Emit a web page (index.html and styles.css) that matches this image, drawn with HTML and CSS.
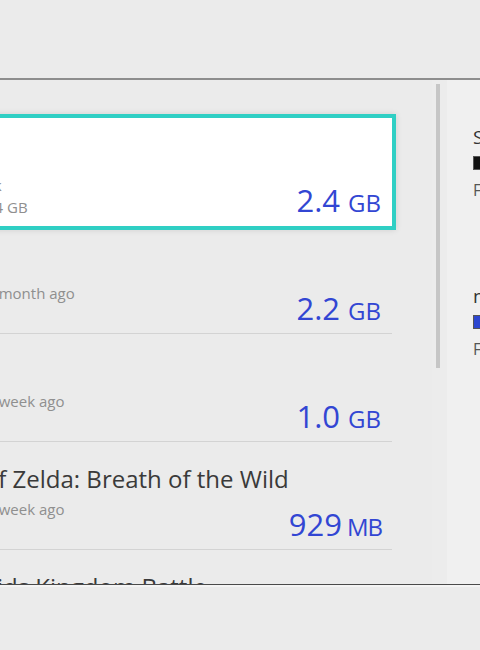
FILE: index.html
```html
<!DOCTYPE html>
<html lang="en">
<head>
    <meta charset="UTF-8">
    <meta name="viewport" content="width=device-width, initial-scale=1.0">
    <title>Manage Software</title>
    <link rel="stylesheet" href="styles.css">
</head>
<body>

    <div class="top-bar"></div>

    <div class="main">
        <!-- lista de softwares -->
        <div class="list">
            <div class="row selected">
                <div class="info">
                    <div class="title">Splatoon 2</div>
                    <div class="sub">Includes the DLC pack</div>
                    <div class="sub">Total w/ save data: 2.4 GB</div>
                </div>
                <div class="size"><span class="num">2.4</span><span class="unit">GB</span></div>
            </div>
            <div class="row">
                <div class="info">
                    <div class="title">ARMS</div>
                    <div class="sub">Last played: almost 1 month ago</div>
                </div>
                <div class="size"><span class="num">2.2</span><span class="unit">GB</span></div>
            </div>
            <div class="row">
                <div class="info">
                    <div class="title">1-2-Switch</div>
                    <div class="sub">Last played: almost 1 week ago</div>
                </div>
                <div class="size"><span class="num">1.0</span><span class="unit">GB</span></div>
            </div>
            <div class="row">
                <div class="info">
                    <div class="title">The Legend of Zelda: Breath of the Wild</div>
                    <div class="sub">Last played: almost 1 week ago</div>
                </div>
                <div class="size"><span class="num">929</span><span class="unit unit-mb">MB</span></div>
            </div>
            <div class="row">
                <div class="info">
                    <div class="title">Mario + Rabbids Kingdom Battle</div>
                    <div class="sub">Last played: almost 2 weeks ago</div>
                </div>
                <div class="size"><span class="num">2.8</span><span class="unit">GB</span></div>
            </div>
        </div>

        <div class="track">
            <div class="thumb"></div>
        </div>

        <!-- painel de armazenamento -->
        <div class="panel">
            <div class="group">
                <div class="group-title">System Memory</div>
                <div class="swatch black"></div>
                <div class="free">Free Space</div>
            </div>
            <div class="group">
                <div class="group-title">microSD Card</div>
                <div class="swatch blue"></div>
                <div class="free">Free Space</div>
            </div>
        </div>
    </div>

    <div class="bottom-bar"></div>

</body>
</html>
```

FILE: styles.css
```css
body {
    margin: 0;
    font-family: "Open Sans", "Noto Sans", sans-serif;
    background-color: #ebebeb;
    color: #3c3c3c;
    overflow: hidden;
}
.top-bar {
    height: 78px;
    border-bottom: 2px solid #8d8d8d;
}
.main {
    display: flex;
    height: 504px;
    overflow: hidden;
}
.list {
    flex: none;
    width: 592px;
    margin-left: -200px;
    padding-top: 38px;
}
.row {
    position: relative;
    box-sizing: border-box;
    height: 108px;
    display: flex;
    justify-content: space-between;
    padding: 22px 11px 0 48px;
    border-bottom: 1px solid #d3d3d3;
    white-space: nowrap;
}
.row.selected {
    z-index: 1;
    background-color: #fff;
    border-bottom-color: #fff;
    box-shadow: 0 0 0 4px #2fcfc4, 0 0 6px 4px rgba(0,0,0,0.12);
}
.title {
    font-size: 24px;
    line-height: 30px;
    color: #3a3a3a;
}
.sub {
    font-size: 15px;
    line-height: 20px;
    margin-top: 5px;
    color: #8f8f8f;
}
.sub + .sub {
    margin-top: 2px;
}
.size {
    align-self: flex-end;
    padding-bottom: 3px;
    line-height: 32px;
    color: #3246d3;
}
.num {
    font-size: 31px;
}
.unit {
    font-size: 24px;
    margin-left: 8px;
}
.unit-mb {
    margin-left: 5px;
    letter-spacing: -1px;
}
.track {
    flex: none;
    width: 15px;
    margin-left: 40px;
    background-color: #ececec;
}
.thumb {
    width: 4px;
    height: 284px;
    margin: 4px 0 0 4px;
    background-color: #c6c6c6;
}
.panel {
    flex: 1;
    height: 495px;
    padding: 44px 0 0 26px;
    background-color: #f0f0f0;
    overflow: hidden;
    white-space: nowrap;
}
.group {
    height: 159px;
}
.group-title {
    font-size: 19px;
    line-height: 26px;
    color: #333;
}
.swatch {
    width: 16px;
    height: 12px;
    margin-top: 6px;
    border: 1px solid #555;
}
.swatch.black {
    background-color: #111;
}
.swatch.blue {
    background-color: #2d47d0;
}
.free {
    margin-top: 9px;
    font-size: 16px;
    color: #555;
}
.bottom-bar {
    border-top: 1px solid #4a4a4a;
    box-shadow: inset 0 2px #f4f4f4;
    height: 65px;
}
```
